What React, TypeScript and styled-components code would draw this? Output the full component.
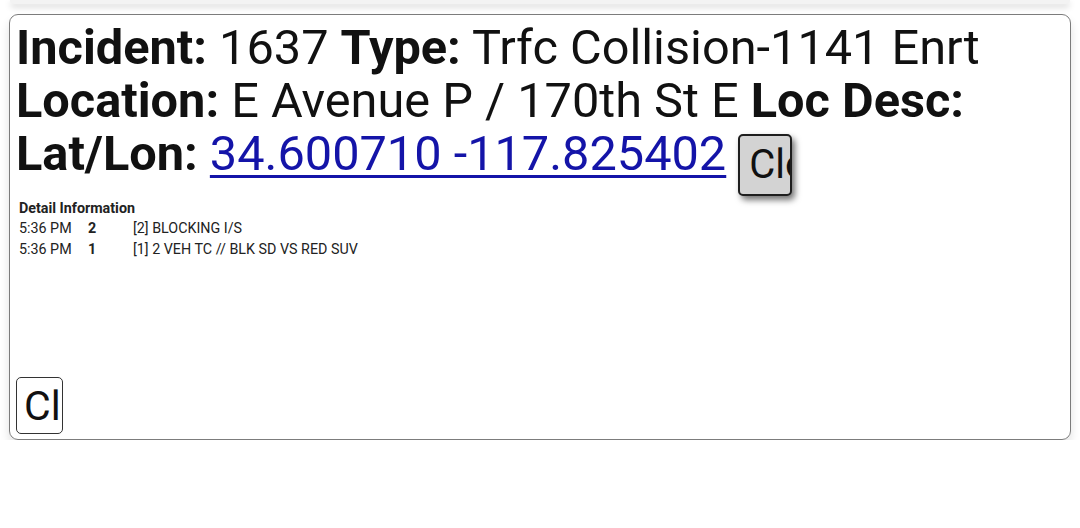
import styled, { createGlobalStyle } from 'styled-components';

const GlobalStyle = createGlobalStyle`
  html, body {
    margin: 0;
    padding: 0;
    background: #ffffff;
    font-family: Roboto, "Liberation Sans", sans-serif;
    color: #111;
  }
`;

const Page = styled.div`
  padding: 0 9px;
  display: flex;
  flex-direction: column;
  gap: 10px;
`;

const PrevCard = styled.div`
  height: 4px;
  margin: 0 1px;
  background: #f3f3f3;
  border-radius: 0 0 8px 8px;
  box-shadow: 0 3px 6px rgba(0, 0, 0, 0.18);
`;

const Card = styled.div`
  height: 426px;
  box-sizing: border-box;
  border: 1.5px solid #7c7c7c;
  border-radius: 9px;
  box-shadow: 0 6px 10px rgba(0, 0, 0, 0.12);
  padding: 6px 6px 5px 6px;
  display: flex;
  flex-direction: column;
`;

const Header = styled.div`
  font-size: 48.7px;
  line-height: 53px;
  color: #111;
`;

const Label = styled.b`
  font-weight: 700;
`;

const MapLink = styled.a`
  color: #1414a8;
  text-decoration: underline;
  text-decoration-thickness: 3px;
  text-underline-offset: 5px;
`;

const CloseButton = styled.button<{ $raised?: boolean }>`
  font-family: Roboto, "Liberation Sans", sans-serif;
  font-size: ${(p) => (p.$raised ? '40px' : '41px')};
  width: ${(p) => (p.$raised ? '54px' : '47px')};
  height: ${(p) => (p.$raised ? '62px' : '57px')};
  padding: 0 0 0 ${(p) => (p.$raised ? '9px' : '7px')};
  text-align: left;
  white-space: nowrap;
  overflow: hidden;
  color: #111;
  background: ${(p) => (p.$raised ? '#d3d3d3' : '#ffffff')};
  border: ${(p) => (p.$raised ? '2px solid #1e1e1e' : '1.5px solid #333')};
  border-radius: 5px;
  box-shadow: ${(p) => (p.$raised ? '3px 4px 6px rgba(0, 0, 0, 0.55)' : 'none')};
  vertical-align: ${(p) => (p.$raised ? '-8px' : 'baseline')};
  margin-left: ${(p) => (p.$raised ? '12px' : '0')};
`;

const Details = styled.div`
  margin-top: 2px;
  padding-left: 3px;
  font-size: 14.3px;
  line-height: 21px;
  color: #222;
`;

const DetailTitle = styled.div`
  font-weight: 700;
  font-size: 14.3px;
  line-height: 20px;
`;

const DetailRow = styled.div`
  display: grid;
  grid-template-columns: 69px 45px 1fr;
`;

const Seq = styled.span`
  font-weight: 700;
`;

const Footer = styled.div`
  margin-top: auto;
  line-height: 0;
`;

const rows = [
  { time: '5:36 PM', seq: '2', text: '[2] BLOCKING I/S' },
  { time: '5:36 PM', seq: '1', text: '[1] 2 VEH TC // BLK SD VS RED SUV' },
];

export default function App() {
  return (
    <>
      <GlobalStyle />
      <Page>
        <PrevCard />
        <Card>
          <Header>
            <Label>Incident:</Label> 1637 <Label>Type:</Label> Trfc Collision-1141 Enrt
            <br />
            <Label>Location:</Label> E Avenue P / 170th St E <Label>Loc Desc:</Label>
            <br />
            <Label>Lat/Lon:</Label> <MapLink href="#">34.600710 -117.825402</MapLink>
            <CloseButton $raised>Close</CloseButton>
          </Header>
          <Details>
            <DetailTitle>Detail Information</DetailTitle>
            {rows.map((r, i) => (
              <DetailRow key={i}>
                <span>{r.time}</span>
                <Seq>{r.seq}</Seq>
                <span>{r.text}</span>
              </DetailRow>
            ))}
          </Details>
          <Footer>
            <CloseButton>Close</CloseButton>
          </Footer>
        </Card>
      </Page>
    </>
  );
}
